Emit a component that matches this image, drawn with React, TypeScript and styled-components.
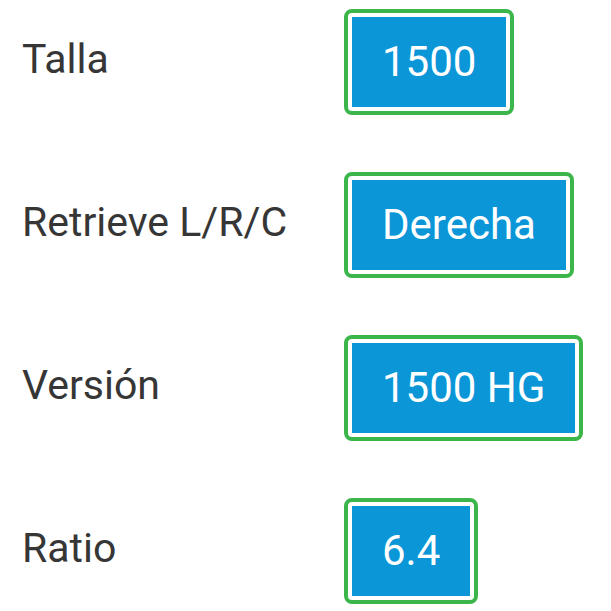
import React from 'react';
import styled, { createGlobalStyle } from 'styled-components';

interface SpecRow {
  label: string;
  value: string;
}

const GlobalStyle = createGlobalStyle`
  body {
    margin: 0;
    background: #ffffff;
    font-family: Roboto, "Noto Sans", "Liberation Sans", sans-serif;
  }
`;

const SpecList = styled.div`
  display: flex;
  flex-direction: column;
  gap: 57px;
  padding: 9px 0 0 22px;
`;

const Row = styled.div`
  display: flex;
  align-items: center;
`;

const Label = styled.div`
  width: 322px;
  margin-bottom: 7px;
  font-size: 41px;
  line-height: 48px;
  color: #363636;
`;

const ValueFrame = styled.div`
  border: 4px solid #3cb64a;
  border-radius: 8px;
  padding: 4px;
  background: #ffffff;
`;

const ValueBox = styled.div`
  padding: 20px 30px;
  background: #0b96d8;
  color: #ffffff;
  font-size: 42px;
  line-height: 50px;
  white-space: nowrap;
`;

const specs: SpecRow[] = [
  { label: 'Talla', value: '1500' },
  { label: 'Retrieve L/R/C', value: 'Derecha' },
  { label: 'Versión', value: '1500 HG' },
  { label: 'Ratio', value: '6.4' },
];

const App: React.FC = () => {
  return (
    <>
      <GlobalStyle />
      <SpecList>
        {specs.map((spec) => (
          <Row key={spec.label}>
            <Label>{spec.label}</Label>
            <ValueFrame>
              <ValueBox>{spec.value}</ValueBox>
            </ValueFrame>
          </Row>
        ))}
      </SpecList>
    </>
  );
};

export default App;
